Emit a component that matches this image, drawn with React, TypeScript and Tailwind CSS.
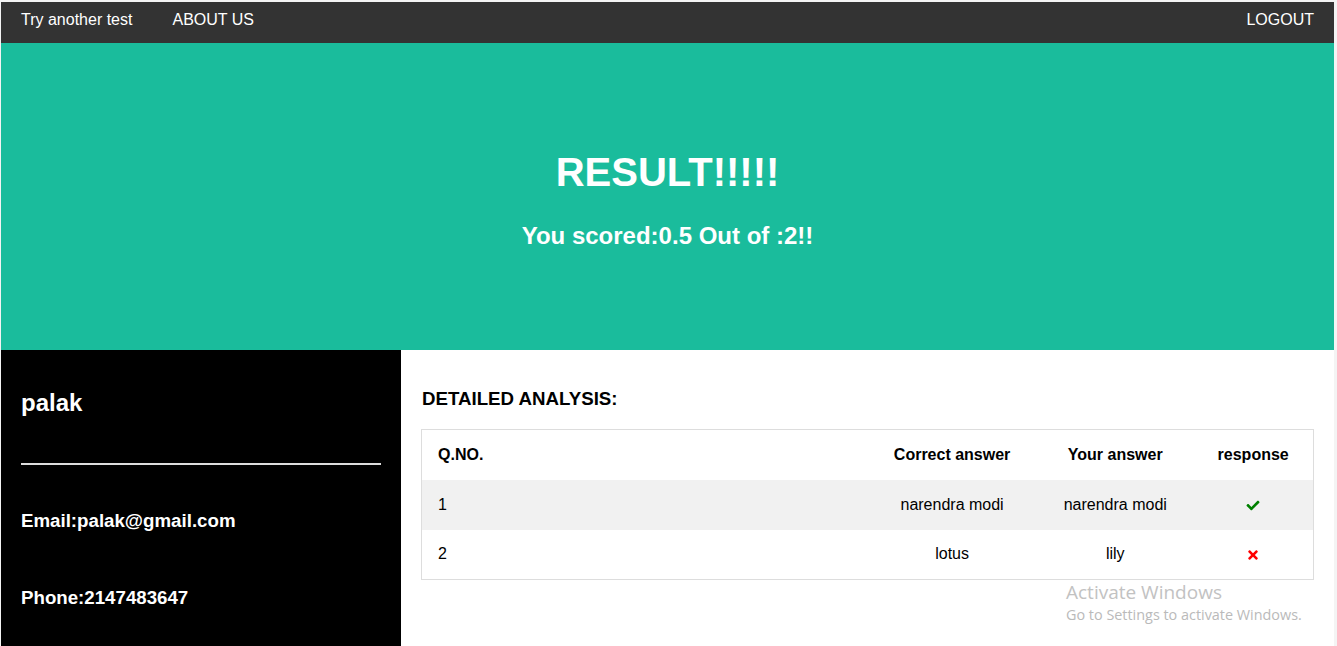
import { FaCheck, FaTimes } from 'react-icons/fa'

const rows = [
  { no: '1', correct: 'narendra modi', yours: 'narendra modi', ok: true },
  { no: '2', correct: 'lotus', yours: 'lily', ok: false }
]

export default function App() {
  return (
    <div className="relative min-h-[646px] bg-[#f4f4f4] pt-[2px] pl-[1px] pr-[3px] font-['Liberation_Sans',Arial,sans-serif] overflow-hidden">
      {/* top bar */}
      <nav className="flex h-[41px] bg-[#333333] text-white text-[16px] leading-[18px]">
        <a className="px-5 pt-[9px]">Try another test</a>
        <a className="px-5 pt-[9px]">ABOUT US</a>
        <a className="ml-auto px-5 pt-[9px]">LOGOUT</a>
      </nav>

      {/* hero */}
      <header className="h-[307px] bg-[#1abc9c] text-white text-center font-bold pt-[106px]">
        <h1 className="text-[40px] leading-[46px]">RESULT!!!!!</h1>
        <p className="mt-[27px] text-[24px] leading-[28px]">You scored:0.5 Out of :2!!</p>
      </header>

      <div className="flex h-[300px] bg-white">
        {/* profile */}
        <aside className="w-[400px] shrink-0 bg-black text-white font-bold px-5 pt-[39px]">
          <h3 className="text-[24px] leading-[28px]">palak</h3>
          <div className="mt-[46px] h-[2px] w-[360px] bg-[#dcdcdc]" />
          <p className="mt-[45px] text-[18.7px] leading-[21px]">Email:palak@gmail.com</p>
          <p className="mt-[56px] text-[18.7px] leading-[21px]">Phone:2147483647</p>
        </aside>

        {/* analysis */}
        <main className="flex-1 px-5 pt-[38px] text-black">
          <h4 className="pl-[1px] text-[18.7px] leading-[21px] font-bold">DETAILED ANALYSIS:</h4>
          <table className="mt-[20px] w-full table-fixed border border-[#dddddd] text-[16px] leading-[18px]">
            <colgroup>
              <col className="w-[445px]" />
              <col className="w-[170px]" />
              <col className="w-[156px]" />
              <col className="w-[120px]" />
            </colgroup>
            <thead>
              <tr className="h-[50px] font-bold">
                <th className="pl-4 text-left">Q.NO.</th>
                <th className="text-center">Correct answer</th>
                <th className="text-center">Your answer</th>
                <th className="text-center">response</th>
              </tr>
            </thead>
            <tbody>
              {rows.map((r, i) => (
                <tr key={r.no} className={i % 2 === 0 ? 'h-[50px] bg-[#f1f1f1]' : 'h-[50px] bg-white'}>
                  <td className="pl-4 text-left">{r.no}</td>
                  <td className="text-center">{r.correct}</td>
                  <td className="text-center">{r.yours}</td>
                  <td>
                    <div className="flex justify-center pt-[2px]">
                      {r.ok ? (
                        <FaCheck className="h-[13px] w-[14px] text-[#008000]" />
                      ) : (
                        <FaTimes className="h-[14px] w-[12px] text-[#ff0000]" />
                      )}
                    </div>
                  </td>
                </tr>
              ))}
            </tbody>
          </table>
        </main>
      </div>

      {/* windows watermark */}
      <div className="absolute left-[1066px] top-[582px] font-['Open_Sans',sans-serif] text-[#c2c2c2] pointer-events-none">
        <div className="text-[19px] leading-[20px]">Activate Windows</div>
        <div className="mt-[5px] text-[14.4px] leading-[16px] text-[#bababa]">Go to Settings to activate Windows.</div>
      </div>
    </div>
  )
}
